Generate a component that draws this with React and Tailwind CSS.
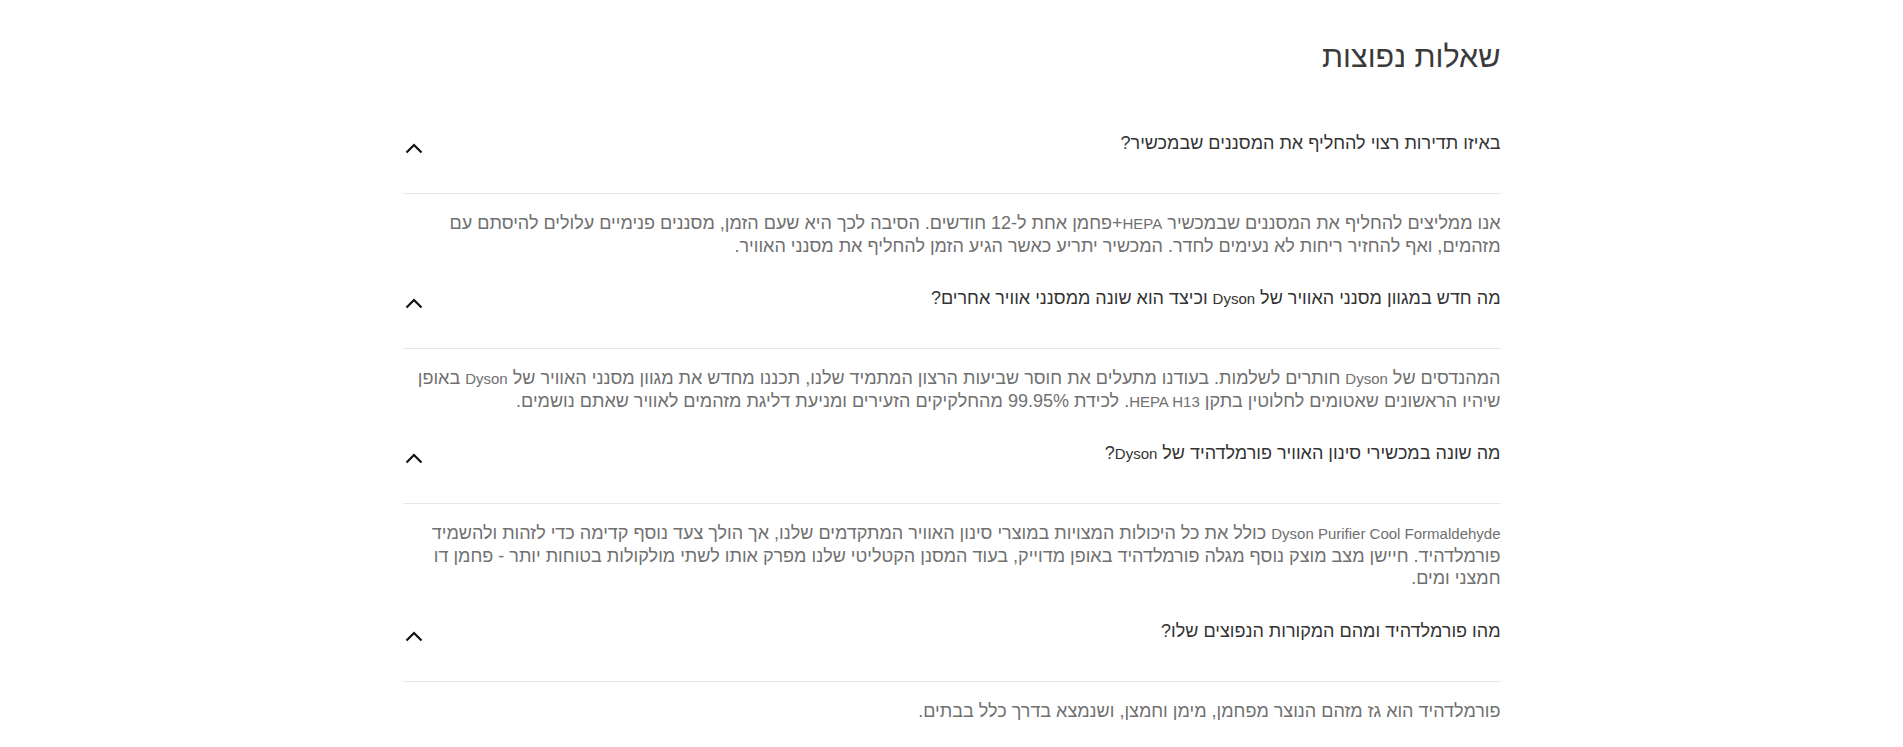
import React from "react";

const L = ({ children }) => <span className="text-[15px] leading-none">{children}</span>;

const items = [
  {
    q: "באיזו תדירות רצוי להחליף את המסננים שבמכשיר?",
    a: [
      <>אנו ממליצים להחליף את המסננים שבמכשיר <L>HEPA</L>+פחמן אחת ל-12 חודשים. הסיבה לכך היא שעם הזמן, מסננים פנימיים עלולים להיסתם עם</>,
      <>מזהמים, ואף להחזיר ריחות לא נעימים לחדר. המכשיר יתריע כאשר הגיע הזמן להחליף את מסנני האוויר.</>,
    ],
  },
  {
    q: <>מה חדש במגוון מסנני האוויר של <L>Dyson</L> וכיצד הוא שונה ממסנני אוויר אחרים?</>,
    a: [
      <>המהנדסים של <L>Dyson</L> חותרים לשלמות. בעודנו מתעלים את חוסר שביעות הרצון המתמיד שלנו, תכננו מחדש את מגוון מסנני האוויר של <L>Dyson</L> באופן</>,
      <>שיהיו הראשונים שאטומים לחלוטין בתקן <L>HEPA H13</L>. לכידת 99.95% מהחלקיקים הזעירים ומניעת דליגת מזהמים לאוויר שאתם נושמים.</>,
    ],
  },
  {
    q: <>מה שונה במכשירי סינון האוויר פורמלדהיד של <L>Dyson</L>?</>,
    a: [
      <><L>Dyson Purifier Cool Formaldehyde</L> כולל את כל היכולות המצויות במוצרי סינון האוויר המתקדמים שלנו, אך הולך צעד נוסף קדימה כדי לזהות ולהשמיד</>,
      <>פורמלדהיד. חיישן מצב מוצק נוסף מגלה פורמלדהיד באופן מדוייק, בעוד המסנן הקטליטי שלנו מפרק אותו לשתי מולקולות בטוחות יותר - פחמן דו</>,
      <>חמצני ומים.</>,
    ],
  },
  {
    q: "מהו פורמלדהיד ומהם המקורות הנפוצים שלו?",
    a: [<>פורמלדהיד הוא גז מזהם הנוצר מפחמן, מימן וחמצן, ושנמצא בדרך כלל בבתים.</>],
  },
];

function Chevron() {
  return (
    <svg width="18" height="11" viewBox="0 0 18 11" className="mt-[14px] ml-[2px] shrink-0">
      <path d="M1.5 9.5 L9 2 L16.5 9.5" fill="none" stroke="#111" strokeWidth="2.2" />
    </svg>
  );
}

export default function App() {
  return (
    <div className="min-h-screen bg-white" style={{ fontFamily: '"Liberation Sans", "DejaVu Sans", sans-serif' }}>
      <div dir="rtl" className="w-[1098px] mx-auto pt-[36px]">
        <h2 className="text-[30.5px] leading-[40px] text-[#3a3a3a] font-normal mb-[26px]">שאלות נפוצות</h2>
        {items.map((it, i) => (
          <div key={i}>
            <div className="flex justify-between items-start pt-[27px] pb-[36px] border-b border-[#e8e8e8]">
              <div className="text-[18px] leading-[28px] text-[#333]">{it.q}</div>
              <Chevron />
            </div>
            <div className="pt-[18px] text-[18px] leading-[22.5px] text-[#707070]">
              {it.a.map((line, j) => (
                <div key={j} className="whitespace-nowrap">{line}</div>
              ))}
            </div>
          </div>
        ))}
      </div>
    </div>
  );
}
